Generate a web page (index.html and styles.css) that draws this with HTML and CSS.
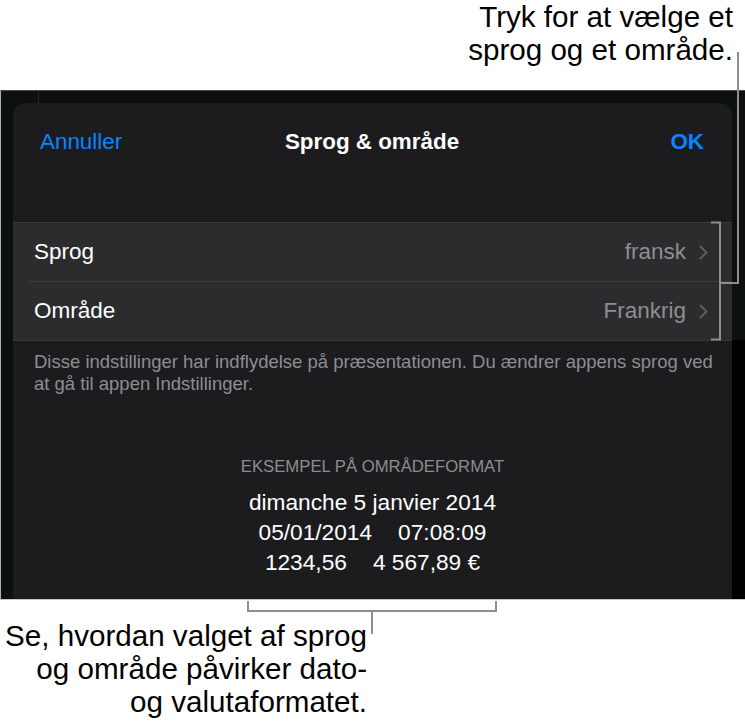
FILE: index.html
```html
<!DOCTYPE html>
<html lang="da">
<head>
<meta charset="utf-8">
<title>Sprog &amp; område</title>
<link rel="stylesheet" href="styles.css">
</head>
<body>
<div class="page">
  <p class="callout callout-top">Tryk for at vælge et<br>sprog og et område.</p>
  <div class="screen">
    <div class="sheet">
      <div class="nav">
        <span class="nav-btn nav-cancel">Annuller</span>
        <span class="nav-title">Sprog &amp; område</span>
        <span class="nav-btn nav-done">OK</span>
      </div>
      <div class="group">
        <div class="row">
          <span class="row-label">Sprog</span>
          <span class="row-value">fransk</span>
          <svg class="chevron" width="9" height="15" viewBox="0 0 9 15"><path d="M1.5 1.5 L7.5 7.5 L1.5 13.5"/></svg>
        </div>
        <div class="row">
          <span class="row-label">Område</span>
          <span class="row-value">Frankrig</span>
          <svg class="chevron" width="9" height="15" viewBox="0 0 9 15"><path d="M1.5 1.5 L7.5 7.5 L1.5 13.5"/></svg>
        </div>
      </div>
      <p class="footnote">Disse indstillinger har indflydelse på præsentationen. Du ændrer appens sprog ved at gå til appen Indstillinger.</p>
      <div class="sample">
        <div class="sample-head">EKSEMPEL PÅ OMRÅDEFORMAT</div>
        <div class="sample-line">dimanche 5 janvier 2014</div>
        <div class="sample-line"><span>05/01/2014</span><span>07:08:09</span></div>
        <div class="sample-line"><span>1234,56</span><span>4 567,89 €</span></div>
      </div>
    </div>
  </div>
  <p class="callout callout-bottom">Se, hvordan valget af sprog<br>og område påvirker dato-<br>og valutaformatet.</p>
  <svg class="leaders" width="745" height="726" viewBox="0 0 745 726">
    <path d="M738 52 V283 H720"/>
    <path d="M711 222.5 H720 V339.5 H711"/>
    <path d="M248 601 V611 H496 V601"/>
    <path d="M372 611 V634"/>
  </svg>
</div>
</body>
</html>
```

FILE: styles.css
```css
html, body {
  margin: 0;
  padding: 0;
  background: #ffffff;
}

body {
  font-family: "Liberation Sans", Arial, sans-serif;
  color: #000;
}

.page {
  position: relative;
  width: 745px;
  height: 726px;
  overflow: hidden;
}

.callout {
  margin: 0;
  font-size: 29.6px;
  line-height: 33px;
  text-align: right;
  color: #000;
}

.callout-top {
  height: 90px;
  padding-right: 12px;
  box-sizing: border-box;
}

.callout-bottom {
  width: 367px;
  margin-top: 19px;
}

.screen {
  height: 508px;
  border-top: 1px solid #4a4a4a;
  border-bottom: 1px solid #c8c8c8;
  border-left: 1px solid #b0b0b0;
  background:
    linear-gradient(#262826, #262826) 37px 0 / 1px 12px no-repeat,
    linear-gradient(to bottom, #0d110d 249px, #000 249px) right top / 13px 100% no-repeat,
    #0d110d;
  box-sizing: content-box;
  overflow: hidden;
}

.sheet {
  margin: 12px 13px 0 12px;
  height: 496px;
  background: #1c1c1e;
  border-radius: 12px 12px 0 0;
  color: #fff;
}

.nav {
  display: grid;
  grid-template-columns: 1fr auto 1fr;
  align-items: center;
  height: 77px;
  padding: 0 28px 0 27px;
  font-size: 22.4px;
}

.nav-btn {
  color: #0a84ff;
}

.nav-done {
  justify-self: end;
  font-weight: bold;
}

.nav-title {
  font-weight: bold;
  color: #fff;
}

.group {
  margin-top: 42px;
  background: #2c2c2e;
  border-top: 1px solid #39393c;
  border-bottom: 1px solid #39393c;
}

.row {
  display: flex;
  align-items: center;
  height: 58px;
  padding: 0 24px 0 21px;
  font-size: 22.5px;
  position: relative;
}

.row + .row {
  border-top: 1px solid #3c3c3f;
  margin-left: 15px;
  padding-left: 6px;
}

.row-label {
  flex: 1;
  color: #fff;
}

.row-value {
  color: #8e8e93;
  margin-right: 13px;
}

.chevron path {
  fill: none;
  stroke: #5d5d62;
  stroke-width: 2;
  stroke-linecap: round;
  stroke-linejoin: round;
}

.footnote {
  margin: 10px 0 0 0;
  padding: 0 18px 0 21px;
  font-size: 18.5px;
  line-height: 22px;
  color: #8d8d93;
}

.sample {
  margin-top: 62px;
  display: flex;
  flex-direction: column;
  align-items: center;
}

.sample-head {
  font-size: 16.7px;
  line-height: 20px;
  color: #8d8d92;
  margin-bottom: 10px;
}

.sample-line {
  display: flex;
  gap: 26px;
  font-size: 22.7px;
  line-height: 30px;
  color: #fff;
}

.leaders {
  position: absolute;
  left: 0;
  top: 0;
  pointer-events: none;
}

.leaders path {
  fill: none;
  stroke: #8e8e8e;
  stroke-width: 2;
}
```
